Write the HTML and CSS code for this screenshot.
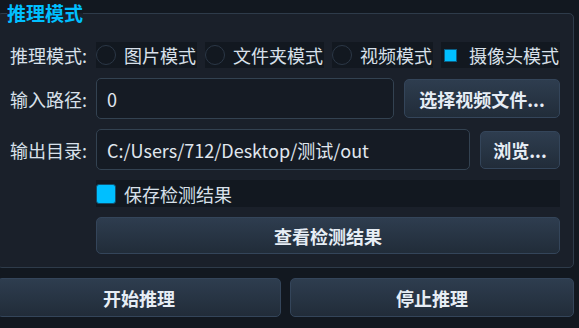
FILE: index.html
```html
<!DOCTYPE html>
<html lang="zh">
<head>
<meta charset="utf-8">
<title>推理模式</title>
<link rel="stylesheet" href="styles.css">
</head>
<body>
<div class="wrap">
  <fieldset class="group">
    <legend class="title">推理模式</legend>
    <div class="grid">
      <div class="label">推理模式:</div>
      <div class="radios">
        <div class="radio"><span class="dot"></span><span>图片模式</span></div>
        <div class="radio"><span class="dot"></span><span>文件夹模式</span></div>
        <div class="radio"><span class="dot"></span><span>视频模式</span></div>
        <div class="radio checked"><span class="dot"><span class="mark"></span></span><span>摄像头模式</span></div>
      </div>

      <div class="label">输入路径:</div>
      <div class="field-row">
        <div class="input">0</div>
        <div class="btn btn-file">选择视频文件...</div>
      </div>

      <div class="label">输出目录:</div>
      <div class="field-row">
        <div class="input">C:/Users/712/Desktop/测试/out</div>
        <div class="btn btn-browse">浏览...</div>
      </div>

      <div class="spacer"></div>
      <div class="check-row"><span class="checkbox"></span><span>保存检测结果</span></div>

      <div class="spacer"></div>
      <div class="btn btn-view">查看检测结果</div>
    </div>
  </fieldset>
  <div class="actions">
    <div class="btn btn-action">开始推理</div>
    <div class="btn btn-action">停止推理</div>
  </div>
</div>
</body>
</html>
```
FILE: styles.css
```css
html, body {
  margin: 0;
  padding: 0;
  background: #121820;
  width: 579px;
  height: 328px;
  overflow: hidden;
}
body {
  font-family: "Noto Sans CJK SC", "Noto Sans", sans-serif;
  font-size: 18px;
  color: #d8e0ea;
}
.wrap {
  margin-left: -3px;
  width: 577px;
  padding-top: 3px;
}
.group {
  margin: 0;
  padding: 0;
  border: 1px solid #2e3b4a;
  border-radius: 5px;
  background: #1a202a;
  min-width: 0;
}
.title {
  margin-left: 9px;
  padding: 0;
  font-size: 19px;
  line-height: 20px;
  font-weight: bold;
  color: #00bfff;
}
.grid {
  display: grid;
  grid-template-columns: auto 1fr;
  grid-template-rows: 26px 41px 41px 27px 37px;
  column-gap: 9px;
  row-gap: 10px;
  padding: 19px 13px 13px 12px;
}
.label {
  display: flex;
  align-items: center;
  line-height: 20px;
  color: #d8e0ea;
}
.radios {
  display: flex;
  justify-content: space-between;
}
.radio {
  display: flex;
  align-items: center;
  gap: 8px;
  background: #121820;
  padding-right: 1px;
  line-height: 20px;
}
.dot {
  width: 18px;
  height: 18px;
  border: 1px solid #2b3746;
  border-radius: 50%;
  display: flex;
  align-items: center;
  justify-content: center;
}
.radio.checked .dot {
  border: none;
  border-radius: 0;
  width: 20px;
  height: 20px;
}
.mark {
  width: 11px;
  height: 11px;
  background: #00bfff;
  border: 1px solid #0a5f86;
}
.field-row {
  display: flex;
  align-items: center;
  gap: 10px;
}
.input {
  flex: 1;
  box-sizing: border-box;
  height: 41px;
  display: flex;
  align-items: center;
  padding-left: 10px;
  background: #151b24;
  border: 1px solid #334251;
  border-radius: 5px;
  color: #e0e7ef;
  white-space: nowrap;
}
.btn {
  box-sizing: border-box;
  display: flex;
  align-items: center;
  justify-content: center;
  background: linear-gradient(#2e3d4f, #212c39);
  border: 1px solid #34455a;
  border-radius: 5px;
  font-weight: bold;
  color: #e6edf5;
  white-space: nowrap;
}
.btn-file {
  width: 156px;
  height: 39px;
}
.btn-browse {
  width: 80px;
  height: 38px;
}
.check-row {
  display: flex;
  align-items: center;
  gap: 8px;
  background: #121820;
  line-height: 20px;
}
.checkbox {
  width: 18px;
  height: 18px;
  background: #00bfff;
  border: 1px solid #10506e;
  border-radius: 3px;
}
.btn-view {
  height: 37px;
}
.actions {
  display: flex;
  gap: 9px;
  margin-top: 10px;
}
.btn-action {
  flex: 1;
  height: 39px;
}
```
